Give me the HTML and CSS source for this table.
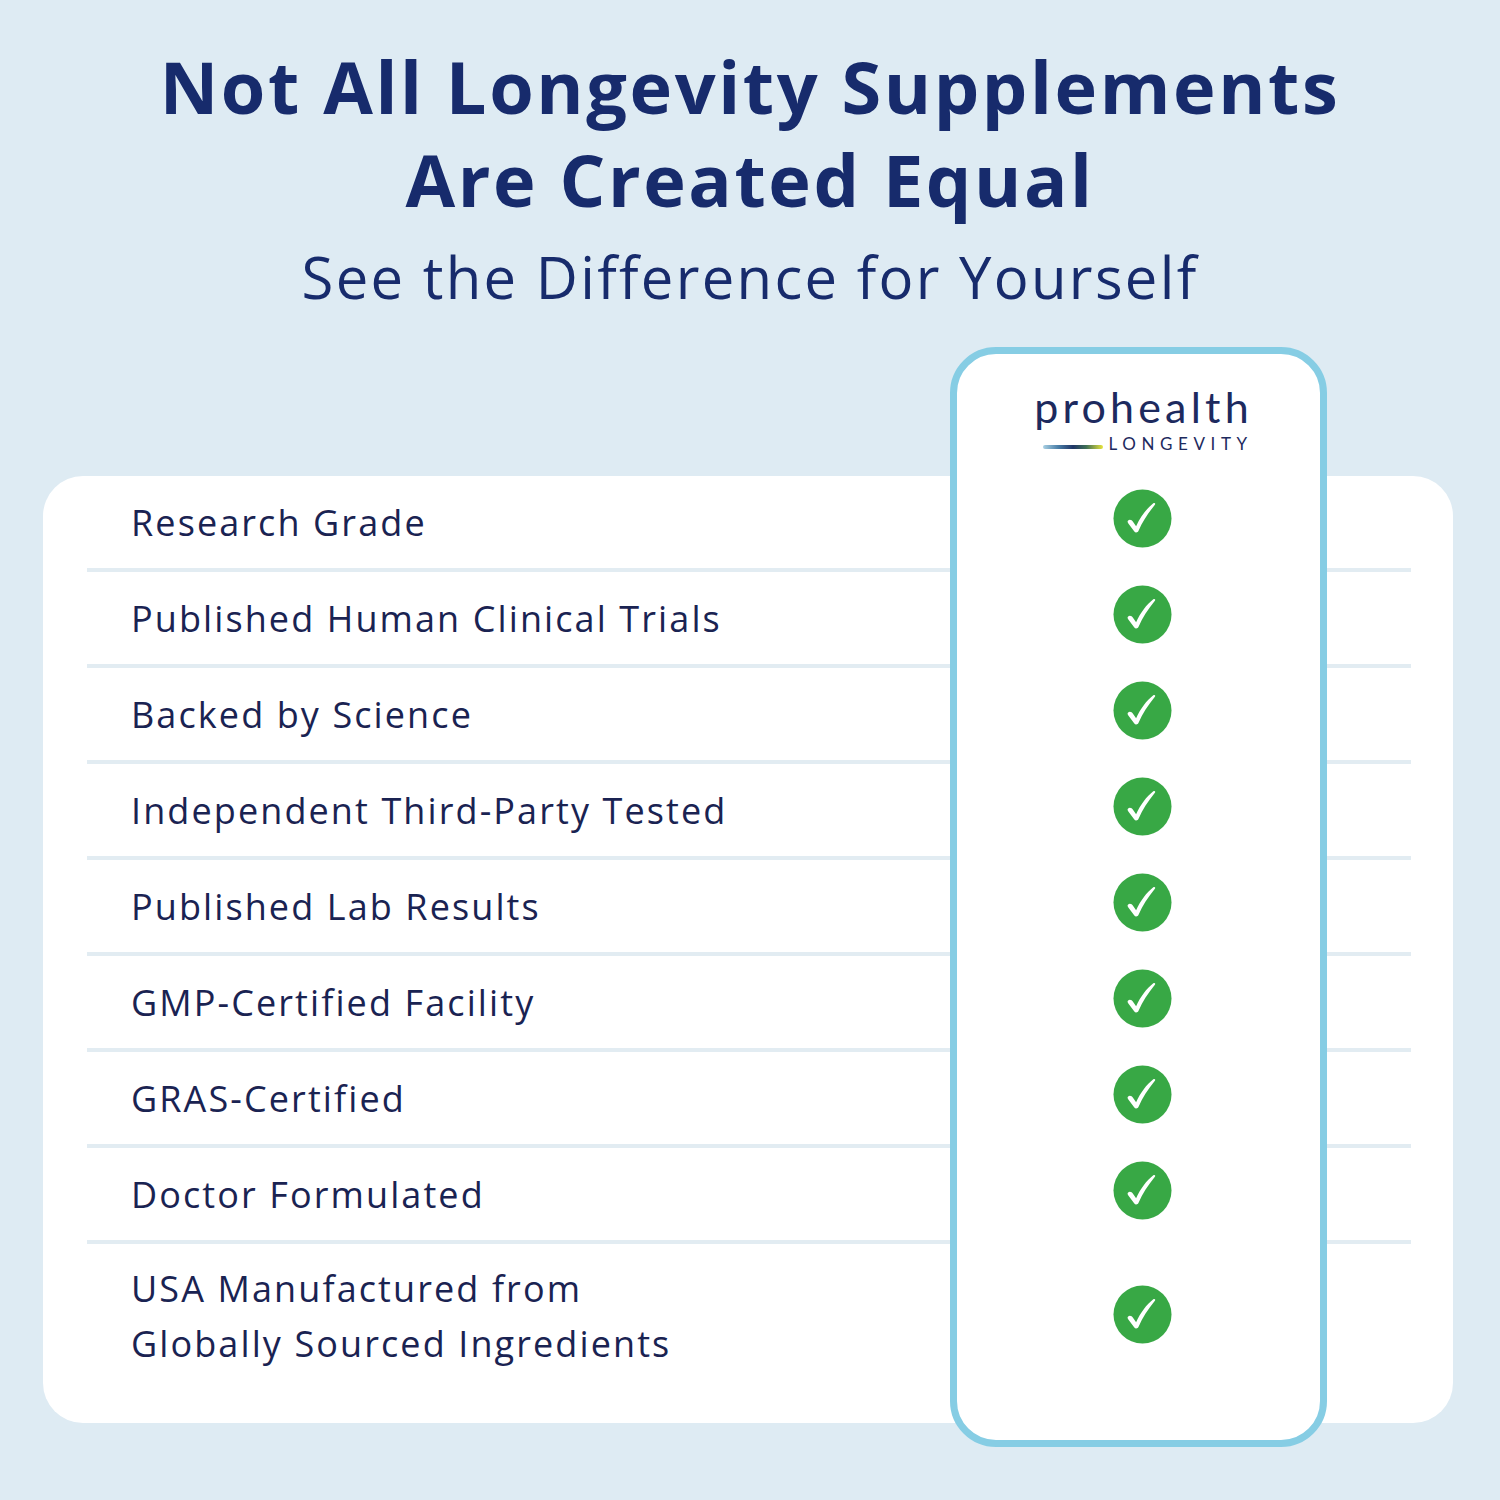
FILE: index.html
```html
<!DOCTYPE html>
<html lang="en">
<head>
<meta charset="utf-8">
<title>Not All Longevity Supplements Are Created Equal</title>
<link rel="stylesheet" href="styles.css">
</head>
<body>
<header class="hero">
  <h1 class="hero-title">Not All Longevity Supplements<br>Are Created Equal</h1>
  <p class="hero-sub">See the Difference for Yourself</p>
</header>

<section class="compare">
  <div class="card">
    <ul class="rows">
      <li class="row"><span class="row-text">Research Grade</span></li>
      <li class="row"><span class="row-text">Published Human Clinical Trials</span></li>
      <li class="row"><span class="row-text">Backed by Science</span></li>
      <li class="row"><span class="row-text">Independent Third-Party Tested</span></li>
      <li class="row"><span class="row-text">Published Lab Results</span></li>
      <li class="row"><span class="row-text">GMP-Certified Facility</span></li>
      <li class="row"><span class="row-text">GRAS-Certified</span></li>
      <li class="row"><span class="row-text">Doctor Formulated</span></li>
      <li class="row row-last"><span class="row-text">USA Manufactured from<br>Globally Sourced Ingredients</span></li>
    </ul>
  </div>

  <div class="brand-col">
    <div class="logo-cell">
      <div class="logo">
        <span class="logo-word">prohealth</span>
        <span class="logo-sub"><span class="logo-bar"></span><span class="logo-tag">LONGEVITY</span></span>
      </div>
    </div>
    <ul class="checks">
      <li class="check-cell"><svg class="check" viewBox="0 0 60 60"><circle cx="30" cy="30" r="29.5"/><path d="M15 32.5 C16.5 30.5 19 31 20.5 33.5 L23.5 38 C28 28 34 20 41 14.5 C42.5 13.5 43.5 14.8 42.6 16 C35.5 25 30 33 26 42.5 C25.2 44.5 22.6 44.8 21.5 43 L15.6 35 C15 34.2 14.6 33.2 15 32.5 Z"/></svg></li>
      <li class="check-cell"><svg class="check" viewBox="0 0 60 60"><circle cx="30" cy="30" r="29.5"/><path d="M15 32.5 C16.5 30.5 19 31 20.5 33.5 L23.5 38 C28 28 34 20 41 14.5 C42.5 13.5 43.5 14.8 42.6 16 C35.5 25 30 33 26 42.5 C25.2 44.5 22.6 44.8 21.5 43 L15.6 35 C15 34.2 14.6 33.2 15 32.5 Z"/></svg></li>
      <li class="check-cell"><svg class="check" viewBox="0 0 60 60"><circle cx="30" cy="30" r="29.5"/><path d="M15 32.5 C16.5 30.5 19 31 20.5 33.5 L23.5 38 C28 28 34 20 41 14.5 C42.5 13.5 43.5 14.8 42.6 16 C35.5 25 30 33 26 42.5 C25.2 44.5 22.6 44.8 21.5 43 L15.6 35 C15 34.2 14.6 33.2 15 32.5 Z"/></svg></li>
      <li class="check-cell"><svg class="check" viewBox="0 0 60 60"><circle cx="30" cy="30" r="29.5"/><path d="M15 32.5 C16.5 30.5 19 31 20.5 33.5 L23.5 38 C28 28 34 20 41 14.5 C42.5 13.5 43.5 14.8 42.6 16 C35.5 25 30 33 26 42.5 C25.2 44.5 22.6 44.8 21.5 43 L15.6 35 C15 34.2 14.6 33.2 15 32.5 Z"/></svg></li>
      <li class="check-cell"><svg class="check" viewBox="0 0 60 60"><circle cx="30" cy="30" r="29.5"/><path d="M15 32.5 C16.5 30.5 19 31 20.5 33.5 L23.5 38 C28 28 34 20 41 14.5 C42.5 13.5 43.5 14.8 42.6 16 C35.5 25 30 33 26 42.5 C25.2 44.5 22.6 44.8 21.5 43 L15.6 35 C15 34.2 14.6 33.2 15 32.5 Z"/></svg></li>
      <li class="check-cell"><svg class="check" viewBox="0 0 60 60"><circle cx="30" cy="30" r="29.5"/><path d="M15 32.5 C16.5 30.5 19 31 20.5 33.5 L23.5 38 C28 28 34 20 41 14.5 C42.5 13.5 43.5 14.8 42.6 16 C35.5 25 30 33 26 42.5 C25.2 44.5 22.6 44.8 21.5 43 L15.6 35 C15 34.2 14.6 33.2 15 32.5 Z"/></svg></li>
      <li class="check-cell"><svg class="check" viewBox="0 0 60 60"><circle cx="30" cy="30" r="29.5"/><path d="M15 32.5 C16.5 30.5 19 31 20.5 33.5 L23.5 38 C28 28 34 20 41 14.5 C42.5 13.5 43.5 14.8 42.6 16 C35.5 25 30 33 26 42.5 C25.2 44.5 22.6 44.8 21.5 43 L15.6 35 C15 34.2 14.6 33.2 15 32.5 Z"/></svg></li>
      <li class="check-cell"><svg class="check" viewBox="0 0 60 60"><circle cx="30" cy="30" r="29.5"/><path d="M15 32.5 C16.5 30.5 19 31 20.5 33.5 L23.5 38 C28 28 34 20 41 14.5 C42.5 13.5 43.5 14.8 42.6 16 C35.5 25 30 33 26 42.5 C25.2 44.5 22.6 44.8 21.5 43 L15.6 35 C15 34.2 14.6 33.2 15 32.5 Z"/></svg></li>
      <li class="check-cell check-last"><svg class="check" viewBox="0 0 60 60"><circle cx="30" cy="30" r="29.5"/><path d="M15 32.5 C16.5 30.5 19 31 20.5 33.5 L23.5 38 C28 28 34 20 41 14.5 C42.5 13.5 43.5 14.8 42.6 16 C35.5 25 30 33 26 42.5 C25.2 44.5 22.6 44.8 21.5 43 L15.6 35 C15 34.2 14.6 33.2 15 32.5 Z"/></svg></li>
    </ul>
  </div>
</section>
</body>
</html>
```

FILE: styles.css
```css
* { box-sizing: border-box; }

html, body {
  margin: 0;
  padding: 0;
}

body {
  width: 1500px;
  height: 1500px;
  background: #deebf3;
  font-family: "Open Sans", "Noto Sans", sans-serif;
  color: #172b6c;
  padding-top: 40px;
  overflow: hidden;
}

.hero {
  text-align: center;
}

.hero-title {
  margin: 0;
  font-size: 72px;
  line-height: 93px;
  font-weight: 700;
  letter-spacing: 2.6px;
  color: #172b6c;
}

.hero-sub {
  margin: 16px 0 0;
  font-size: 58px;
  line-height: 70px;
  font-weight: 400;
  letter-spacing: 2.3px;
  color: #172b6c;
}

.compare {
  position: relative;
  margin-top: 35px;
  padding-top: 129px;
}

.card {
  margin-left: 43px;
  width: 1410px;
  height: 947px;
  background: #ffffff;
  border-radius: 40px;
}

.rows {
  list-style: none;
  margin: 0;
  padding: 0 42px 0 44px;
}

.row {
  height: 96px;
  border-bottom: 4px solid #e2ecf2;
  display: flex;
  align-items: center;
  padding-left: 44px;
}

.row-last {
  height: 179px;
  border-bottom: 0;
  align-items: flex-start;
  padding-top: 17px;
}

.row-text {
  font-size: 36px;
  line-height: 55px;
  letter-spacing: 2.1px;
  color: #1a2352;
}

.brand-col {
  position: absolute;
  top: 0;
  left: 950px;
  width: 377px;
  height: 1100px;
  background: #ffffff;
  border: 7px solid #86cde4;
  border-radius: 46px;
  display: flex;
  flex-direction: column;
}

.logo-cell {
  height: 122px;
  display: flex;
  justify-content: center;
  padding-top: 32px;
  padding-left: 10px;
}

.logo {
  display: flex;
  flex-direction: column;
  align-items: stretch;
}

.logo-word {
  font-family: "Lato", sans-serif;
  font-weight: 400;
  font-size: 43px;
  line-height: 42px;
  letter-spacing: 4.2px;
  color: #1d2a5e;
}

.logo-sub {
  display: flex;
  align-items: center;
  justify-content: space-between;
  padding-left: 9px;
  margin-top: 6px;
}

.logo-bar {
  width: 60px;
  height: 4px;
  border-radius: 2px;
  background: linear-gradient(90deg, #a9d0e3 0%, #4b7fa8 25%, #1f3566 50%, #3f6f55 72%, #e8e43b 100%);
  margin-top: 6px;
}

.logo-tag {
  font-family: "Lato", sans-serif;
  font-weight: 400;
  font-size: 17px;
  line-height: 20px;
  letter-spacing: 5.6px;
  color: #1d2a5e;
}

.checks {
  list-style: none;
  margin: 0;
  padding: 0;
}

.check-cell {
  height: 96px;
  display: flex;
  align-items: center;
  justify-content: center;
  padding-bottom: 12px;
  padding-left: 7px;
}

.check-last {
  height: auto;
  padding-bottom: 0;
  padding-top: 41px;
}

.check {
  width: 59px;
  height: 59px;
  display: block;
}

.check circle {
  fill: #38a845;
}

.check path {
  fill: #ffffff;
}
```
